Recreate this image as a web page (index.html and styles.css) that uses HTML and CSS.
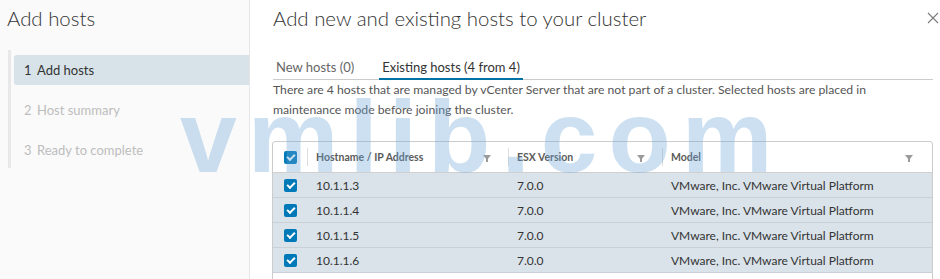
FILE: index.html
```html
<!DOCTYPE html>
<html lang="en">
<head>
    <meta charset="UTF-8">
    <title>Add hosts</title>
    <link rel="stylesheet" href="styles.css">
</head>
<body>
    <div class="wizard">
        <aside class="nav">
            <h2 class="nav-title">Add hosts</h2>
            <ol class="steps">
                <li class="step active"><span class="num">1</span>Add hosts</li>
                <li class="step"><span class="num">2</span>Host summary</li>
                <li class="step"><span class="num">3</span>Ready to complete</li>
            </ol>
        </aside>

        <main class="content">
            <div class="content-head">
                <h1>Add new and existing hosts to your cluster</h1>
                <button class="close" aria-label="Close">
                    <svg width="12" height="12" viewBox="0 0 12 12"><path d="M1 1 L11 11 M11 1 L1 11" stroke="#7a7a7a" stroke-width="1.1" fill="none"/></svg>
                </button>
            </div>

            <div class="tabs">
                <div class="tab">New hosts (0)</div>
                <div class="tab active">Existing hosts (4 from 4)</div>
            </div>

            <p class="desc">There are 4 hosts that are managed by vCenter Server that are not part of a cluster. Selected hosts are placed in maintenance mode before joining the cluster.</p>

            <div class="grid">
                <div class="grid-row grid-head">
                    <div class="cell cell-check"><span class="checkbox"></span></div>
                    <div class="cell col-host"><span class="col-label">Hostname / IP Address</span><span class="filter"></span></div>
                    <div class="cell col-ver"><span class="col-label">ESX Version</span><span class="filter"></span></div>
                    <div class="cell col-model"><span class="col-label">Model</span><span class="filter"></span></div>
                </div>
                <div class="grid-row selected">
                    <div class="cell cell-check"><span class="checkbox"></span></div>
                    <div class="cell col-host">10.1.1.3</div>
                    <div class="cell col-ver">7.0.0</div>
                    <div class="cell col-model">VMware, Inc. VMware Virtual Platform</div>
                </div>
                <div class="grid-row selected">
                    <div class="cell cell-check"><span class="checkbox"></span></div>
                    <div class="cell col-host">10.1.1.4</div>
                    <div class="cell col-ver">7.0.0</div>
                    <div class="cell col-model">VMware, Inc. VMware Virtual Platform</div>
                </div>
                <div class="grid-row selected">
                    <div class="cell cell-check"><span class="checkbox"></span></div>
                    <div class="cell col-host">10.1.1.5</div>
                    <div class="cell col-ver">7.0.0</div>
                    <div class="cell col-model">VMware, Inc. VMware Virtual Platform</div>
                </div>
                <div class="grid-row selected">
                    <div class="cell cell-check"><span class="checkbox"></span></div>
                    <div class="cell col-host">10.1.1.6</div>
                    <div class="cell col-ver">7.0.0</div>
                    <div class="cell col-model">VMware, Inc. VMware Virtual Platform</div>
                </div>
            </div>
        </main>

        <div class="watermark">vmlib.com</div>
    </div>
</body>
</html>
```

FILE: styles.css
```css
body {
    margin: 0;
    font-family: 'Lato', 'Open Sans', sans-serif;
    background: white;
    color: #333;
}
.wizard {
    position: relative;
    display: flex;
    width: 940px;
    height: 279px;
    overflow: hidden;
}
.nav {
    width: 249px;
    flex: none;
    background-color: #fafafa;
    border-right: 1px solid #e6e6e6;
}
.nav-title {
    margin: 0;
    padding-left: 7px;
    font-size: 20.4px;
    font-weight: 300;
    line-height: 36px;
    color: #333;
}
.steps {
    list-style: none;
    margin: 14px 0 0 8px;
    padding: 5px 0 3px 3px;
    border-left: 3px solid #e8e8e8;
}
.step {
    display: flex;
    align-items: center;
    height: 30px;
    padding-left: 10px;
    margin-bottom: 10px;
    font-size: 13px;
    color: #bdbdbd;
    border-radius: 3px 0 0 3px;
}
.step:last-child {
    margin-bottom: 0;
}
.step .num {
    width: 13px;
}
.step.active {
    background-color: #d8e3e9;
    color: #333;
}
.content {
    flex: 1;
    padding: 0 7px 0 23px;
}
.content-head {
    display: flex;
    justify-content: space-between;
    align-items: center;
    height: 36px;
}
.content-head h1 {
    margin: 0;
    font-size: 20.4px;
    font-weight: 300;
    color: #333;
}
.close {
    background: none;
    border: none;
    padding: 0;
    margin-right: -6px;
    width: 12px;
    height: 12px;
    display: flex;
}
.tabs {
    display: flex;
    margin-top: 17px;
    border-bottom: 1px solid #cccccc;
}
.tab {
    padding: 3px 3px 0 3px;
    margin-right: 21px;
    line-height: 22px;
    font-size: 13px;
    color: #666;
    border-bottom: 2px solid transparent;
    margin-bottom: -1px;
}
.tab.active {
    color: #333;
    border-bottom-color: #0072a3;
    margin-left: 1px;
}
.desc {
    margin: 0;
    max-width: 620px;
    font-size: 12.2px;
    line-height: 20px;
    color: #565656;
}
.grid {
    margin: 21px 0 0 -1px;
    border: 1px solid #cccccc;
    border-radius: 3px 3px 0 0;
    height: 200px;
}
.grid-row {
    display: flex;
    height: 24px;
    border-bottom: 1px solid #c9d1d6;
}
.grid-head {
    height: 30px;
    border-bottom: 1px solid #d0d0d0;
    font-size: 10.5px;
    font-weight: 700;
    color: #5a5a5a;
}
.grid-row.selected {
    background-color: #dae3ea;
    font-size: 12px;
    color: #333;
}
.cell {
    display: flex;
    align-items: center;
    padding-left: 9px;
    box-sizing: border-box;
}
.cell-check {
    width: 34px;
    flex: none;
    padding-left: 11px;
}
.col-host {
    width: 201px;
    flex: none;
}
.col-ver {
    width: 154px;
    flex: none;
}
.col-model {
    flex: 1;
}
.grid-head .cell {
    position: relative;
    justify-content: space-between;
    padding-right: 17px;
}
.grid-head .cell-check {
    padding-right: 0;
}
.grid-head .col-model {
    padding-right: 19px;
}
.grid-head .cell + .cell::before {
    content: "";
    position: absolute;
    left: 0;
    top: 6px;
    bottom: 6px;
    border-left: 1px solid #dddddd;
}
.filter {
    width: 0;
    height: 0;
    border-left: 4px solid transparent;
    border-right: 4px solid transparent;
    border-top: 5px solid #9a9a9a;
    position: relative;
}
.filter::after {
    content: "";
    position: absolute;
    left: -1px;
    top: -1px;
    width: 2px;
    height: 3px;
    background: #9a9a9a;
}
.checkbox {
    flex: none;
    width: 13px;
    height: 13px;
    border-radius: 2px;
    background-color: #0079b8;
    position: relative;
}
.checkbox::after {
    content: "";
    position: absolute;
    left: 3px;
    top: 3px;
    width: 6px;
    height: 3px;
    border-left: 2px solid white;
    border-bottom: 2px solid white;
    transform: rotate(-45deg);
}
.watermark {
    position: absolute;
    left: 180px;
    top: 86px;
    font-family: 'Liberation Sans', Arial, sans-serif;
    font-weight: 700;
    font-size: 102px;
    line-height: 1;
    letter-spacing: 11px;
    color: rgba(110, 165, 215, 0.35);
    pointer-events: none;
}
```
